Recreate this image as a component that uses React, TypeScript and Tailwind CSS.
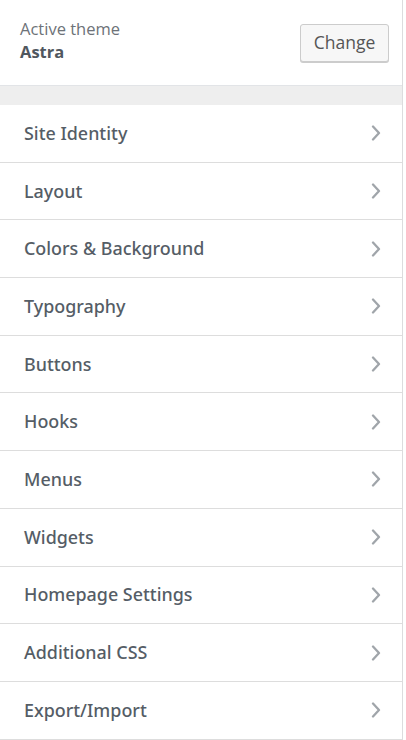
import React from 'react'

const sections = [
  'Site Identity',
  'Layout',
  'Colors & Background',
  'Typography',
  'Buttons',
  'Hooks',
  'Menus',
  'Widgets',
  'Homepage Settings',
  'Additional CSS',
  'Export/Import',
]

const Chevron: React.FC = () => (
  <svg width="12" height="16" viewBox="0 0 12 16" fill="none" className="text-[#a0a5aa]">
    <path d="M3 1.5 L9 8 L3 14.5" stroke="currentColor" strokeWidth="2.3" strokeLinecap="round" strokeLinejoin="round" />
  </svg>
)

export default function App() {
  return (
    <div className="h-[740px] w-[406px] overflow-hidden bg-white" style={{ fontFamily: '"Open Sans", "Noto Sans", sans-serif' }}>
      <div className="flex h-full w-[403px] flex-col border-r border-[#dcdcde]">
        <div className="flex h-[86px] items-center justify-between border-b border-[#e2e4e7] pb-[6px] pl-5 pr-[13px]">
          <div className="flex flex-col">
            <span className="text-[16.5px] leading-[23px] text-[#6d7278]">Active theme</span>
            <span className="text-[16.5px] font-bold leading-[23px] text-[#50575e]">Astra</span>
          </div>
          <button className="mt-[6px] h-[38px] w-[89px] rounded-[3px] border border-[#cccccc] bg-[#f7f7f7] text-[17.5px] text-[#555] shadow-[0_1px_0_#cccccc]">
            Change
          </button>
        </div>
        <div className="h-[19px] bg-[#eeeeee]" />
        <ul className="flex flex-col">
          {sections.map((s) => (
            <li
              key={s}
              className="flex h-[57.7px] items-center justify-between border-b border-[#dddddd] pl-6 pr-[20px]"
            >
              <span className="font-['Noto_Sans',sans-serif] text-[17.9px] font-medium text-[#555d66]">{s}</span>
              <Chevron />
            </li>
          ))}
        </ul>
      </div>
    </div>
  )
}
